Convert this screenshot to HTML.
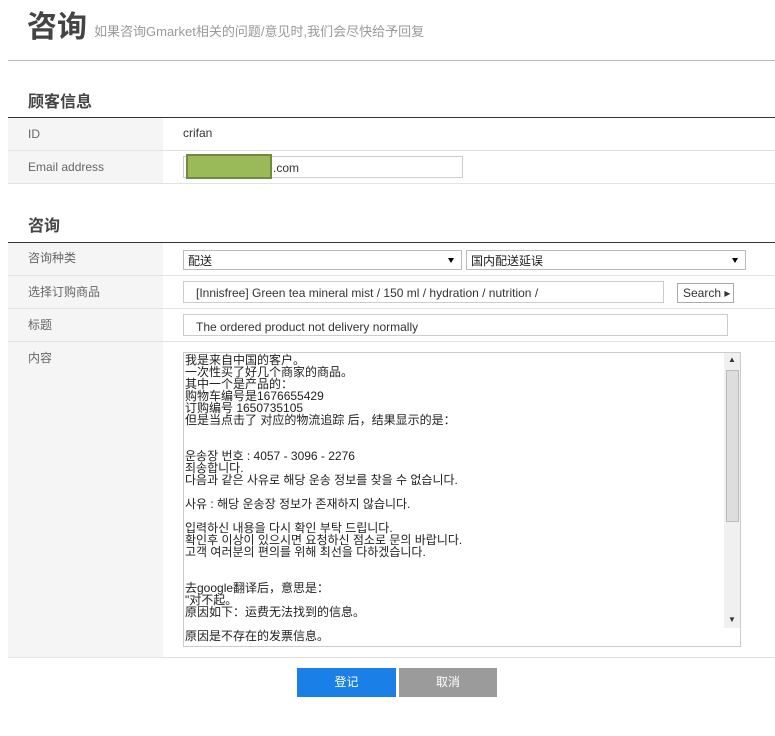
<!DOCTYPE html>
<html><head><meta charset="utf-8"><style>
body{margin:0;width:775px;height:736px;background:#fff;font-family:"Liberation Sans","Noto Sans CJK SC",sans-serif;position:relative;overflow:hidden}
.a{position:absolute}
.lbl{position:absolute;left:8px;width:155px;background:#f5f5f5;font-size:12px;color:#666;padding-left:20px;box-sizing:border-box}
.bd{position:absolute;left:8px;right:0;height:1px;background:#e3e3e3}
.inp{position:absolute;border:1px solid #ccc;box-sizing:border-box;font-size:12px;color:#333;background:#fff}
.sel{position:absolute;border:1px solid #bbb;box-sizing:border-box;font-size:12px;color:#222;padding:1px 4px;background:#fff}
.sel:after{content:"";position:absolute;right:7px;top:7px;border:3px solid transparent;border-top:5px solid #000}
</style></head><body>
<div class="a" style="left:27px;top:2px;font-size:30px;font-weight:bold;color:#444">咨询</div>
<div class="a" style="left:94px;top:21px;font-size:13px;color:#999">如果咨询Gmarket相关的问题/意见时,我们会尽快给予回复</div>
<div class="a" style="left:8px;right:0;top:60px;height:1px;background:#bbb"></div>
<div class="a" style="left:28px;top:88px;font-size:16px;font-weight:bold;color:#444">顾客信息</div>
<div class="a" style="left:8px;right:0;top:117px;height:1px;background:#333"></div>
<div class="lbl" style="top:118px;height:32px;line-height:32px">ID</div>
<div class="a" style="left:183px;top:126px;font-size:12px;color:#333">crifan</div>
<div class="bd" style="top:150px"></div>
<div class="lbl" style="top:151px;height:32px;line-height:32px">Email address</div>
<div class="inp" style="left:183px;top:156px;width:280px;height:22px;padding:4px 0 0 89px">.com</div>
<div class="a" style="left:186px;top:154px;width:82px;height:21px;background:#9aba59;border:2px solid #6e8c3c"></div>
<div class="bd" style="top:183px"></div>
<div class="a" style="left:28px;top:212px;font-size:16px;font-weight:bold;color:#444">咨询</div>
<div class="a" style="left:8px;right:0;top:242px;height:1px;background:#333"></div>
<div class="lbl" style="top:243px;height:32px;line-height:30px">咨询种类</div>
<div class="sel" style="left:183px;top:250px;width:279px;height:20px">配送</div>
<div class="sel" style="left:466px;top:250px;width:280px;height:20px">国内配送延误</div>
<div class="bd" style="top:275px"></div>
<div class="lbl" style="top:276px;height:32px;line-height:32px">选择订购商品</div>
<div class="inp" style="left:183px;top:281px;width:481px;height:22px;padding:4px 0 0 12px">[Innisfree] Green tea mineral mist / 150 ml / hydration / nutrition /</div>
<div class="inp" style="left:677px;top:283px;width:57px;height:20px;border-color:#aaa;padding:2px 0 0 5px">Search ▸</div>
<div class="bd" style="top:308px"></div>
<div class="lbl" style="top:309px;height:32px;line-height:32px">标题</div>
<div class="inp" style="left:183px;top:314px;width:545px;height:22px;padding:5px 0 0 12px">The ordered product not delivery normally</div>
<div class="bd" style="top:341px"></div>
<div class="lbl" style="top:342px;height:315px;line-height:32px">内容</div>
<div class="inp" style="left:183px;top:352px;width:558px;height:295px;overflow:hidden;padding:1px 0 0 1px;font-size:12px;line-height:12px;color:#222;font-family:'Liberation Sans','Noto Sans CJK SC','Noto Sans CJK KR',sans-serif;white-space:pre">我是来自中国的客户。
一次性买了好几个商家的商品。
其中一个是产品的：
购物车编号是1676655429
订购编号 1650735105
但是当点击了 对应的物流追踪 后，结果显示的是：


운송장 번호 : 4057 - 3096 - 2276
죄송합니다.
다음과 같은 사유로 해당 운송 정보를 찾을 수 없습니다.

사유 : 해당 운송장 정보가 존재하지 않습니다.

입력하신 내용을 다시 확인 부탁 드립니다.
확인후 이상이 있으시면 요청하신 점소로 문의 바랍니다.
고객 여러분의 편의를 위해 최선을 다하겠습니다.


去google翻译后，意思是：
"对不起。
原因如下：运费无法找到的信息。

原因是不存在的发票信息。</div>
<div class="a" style="left:724px;top:353px;width:16px;height:275px;background:#f0f0f0"></div>
<div class="a" style="left:726px;top:370px;width:13px;height:152px;background:#ddd;border:1px solid #bbb;box-sizing:border-box"></div>
<div class="a" style="left:728px;top:355px;font-size:8px;color:#333">▲</div>
<div class="a" style="left:728px;top:615px;font-size:8px;color:#333">▼</div>
<div class="bd" style="top:657px"></div>
<div class="a" style="left:297px;top:668px;width:99px;height:29px;background:#1b7fe8;color:#fff;font-size:12px;text-align:center;line-height:29px">登记</div>
<div class="a" style="left:399px;top:668px;width:98px;height:29px;background:#9b9b9b;color:#fff;font-size:12px;text-align:center;line-height:29px">取消</div>
</body></html>
